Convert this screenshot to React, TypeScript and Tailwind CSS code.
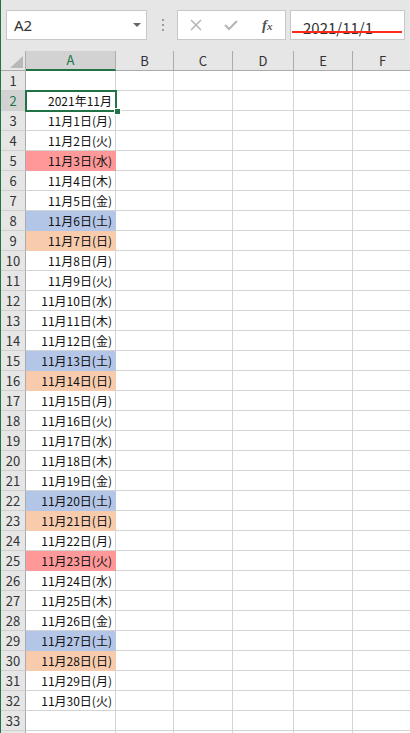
import React from 'react';

const WEEK = ['日', '月', '火', '水', '木', '金', '土'];
const HOLIDAYS = [3, 23];

const OTHER_COLS = [
  { key: 'B', w: 'w-[58px]' },
  { key: 'C', w: 'w-[59px]' },
  { key: 'D', w: 'w-[61px]' },
  { key: 'E', w: 'w-[59px]' },
  { key: 'F', w: 'w-[60px]' },
];

type Row = { n: number; text: string; fill: string };

const rows: Row[] = Array.from({ length: 34 }, (_, i) => {
  const n = i + 1;
  if (n === 2) return { n, text: '2021年11月', fill: '' };
  if (n >= 3 && n <= 32) {
    const d = n - 2;
    const wd = d % 7;
    let fill = '';
    if (HOLIDAYS.includes(d)) fill = 'bg-[#ff9999] border-[#ff9999]';
    else if (wd === 6) fill = 'bg-[#b4c6e7] border-[#b4c6e7]';
    else if (wd === 0) fill = 'bg-[#f8cbad] border-[#f8cbad]';
    return { n, text: `11月${d}日(${WEEK[wd]})`, fill };
  }
  return { n, text: '', fill: '' };
});

const FormulaBar: React.FC = () => (
  <div className="h-[51px] bg-[#e6e6e6] flex items-start pt-[10px]">
    <div className="ml-[5px] w-[141px] shrink-0 h-[30px] bg-white border border-[#c8c8c8] flex items-center pl-[7px] pr-[5px]">
      <span className="text-[15px] text-[#333] font-['Noto_Sans',sans-serif]">A2</span>
      <svg className="ml-auto" width="8" height="5" viewBox="0 0 8 5">
        <path d="M0 0 L8 0 L4 4 Z" fill="#666" />
      </svg>
    </div>
    <div className="ml-[15px] h-[30px] flex flex-col justify-center gap-[3px]">
      <span className="w-[2px] h-[2px] bg-[#9a9a9a]" />
      <span className="w-[2px] h-[2px] bg-[#9a9a9a]" />
      <span className="w-[2px] h-[2px] bg-[#9a9a9a]" />
    </div>
    <div className="ml-[13px] w-[109px] shrink-0 h-[30px] bg-white border border-[#c8c8c8] grid grid-cols-3 place-items-center">
      <svg width="12" height="12" viewBox="0 0 12 12">
        <path d="M1 1 L11 11 M11 1 L1 11" stroke="#b5b5b5" strokeWidth="1.5" />
      </svg>
      <svg width="14" height="11" viewBox="0 0 14 11">
        <path d="M1 5 L5 9 L13 1" stroke="#b5b5b5" strokeWidth="2" fill="none" />
      </svg>
      <span className="text-[15px] italic font-bold text-[#555] font-['Liberation_Serif',serif] leading-none">
        f<span className="text-[11px]">x</span>
      </span>
    </div>
    <div className="ml-[4px] w-[115px] shrink-0 h-[30px] bg-white border border-[#c8c8c8] relative pl-[12px] pt-[4px]">
      <span className="text-[15px] leading-[18px] text-[#333] font-['Noto_Sans_CJK_JP',sans-serif]">2021/11/1</span>
      <div className="absolute left-[1px] right-[2px] top-[20px] h-[2px] bg-[#ff2a1a]" />
    </div>
  </div>
);

const HeaderRow: React.FC = () => (
  <div className="flex h-[20px]">
    <div className="w-[25px] shrink-0 h-full bg-[#e6e6e6] border-r border-b border-[#ababab] relative">
      <svg className="absolute left-[9px] top-[5px]" width="13" height="12" viewBox="0 0 13 12">
        <path d="M13 0 L13 12 L0 12 Z" fill="#b9b9b9" />
      </svg>
    </div>
    <div className="w-[90px] shrink-0 h-full bg-[#d2d2d2] border-r border-[#ababab] border-b-2 border-b-[#217346] flex items-center justify-center text-[13px] text-[#217346]">
      A
    </div>
    {OTHER_COLS.map(c => (
      <div
        key={c.key}
        className={`${c.w} shrink-0 h-full bg-[#e6e6e6] border-r border-b border-[#ababab] flex items-center justify-center text-[13px] text-[#333]`}
      >
        {c.key}
      </div>
    ))}
  </div>
);

export default function App() {
  return (
    <div className="w-[410px] h-[733px] overflow-hidden bg-white border-l border-[#217346] font-['Noto_Sans_CJK_JP','Noto_Sans',sans-serif]">
      <FormulaBar />
      <div className="relative">
        <HeaderRow />
        {rows.map(r => (
          <div key={r.n} className="flex h-[20px]">
            <div
              className={`w-[25px] shrink-0 h-full border-r border-r-[#ababab] border-b border-b-[#d0d0d0] flex items-center justify-center text-[13px] ${
                r.n === 2 ? 'bg-[#d2d2d2] text-[#217346]' : 'bg-[#e6e6e6] text-[#333]'
              }`}
            >
              {r.n <= 33 ? r.n : ''}
            </div>
            <div
              className={`w-[90px] shrink-0 h-full border-r border-b flex items-center justify-end pr-[3px] text-[12px] text-[#111] ${
                r.fill || 'border-[#d4d4d4]'
              }`}
            >
              {r.text}
            </div>
            {OTHER_COLS.map(c => (
              <div key={c.key} className={`${c.w} shrink-0 h-full border-r border-b border-[#d4d4d4]`} />
            ))}
          </div>
        ))}
        <div className="absolute left-[24px] top-[39px] w-[92px] h-[22px] border-2 border-[#217346]" />
        <div className="absolute left-[113px] top-[57px] w-[7px] h-[7px] bg-[#217346] border border-white" />
      </div>
    </div>
  );
}
